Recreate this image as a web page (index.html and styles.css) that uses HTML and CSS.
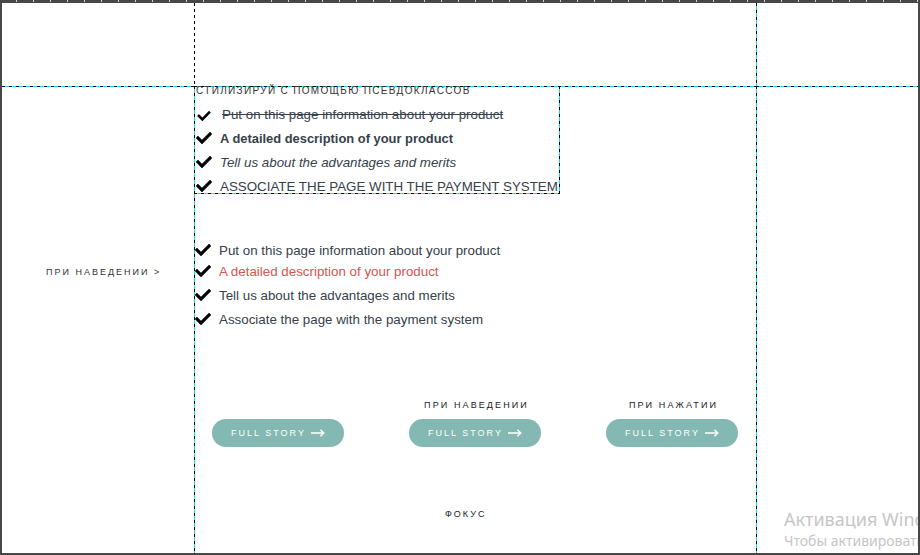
FILE: index.html
```html
<!DOCTYPE html>
<html lang="ru">
<head>
<meta charset="utf-8">
<title>Псевдоклассы</title>
<link rel="stylesheet" href="styles.css">
</head>
<body>
<div class="frame">
  <div class="cell c1r1"></div>
  <div class="cell c2r1"></div>
  <div class="cell c3r1"></div>

  <div class="cell c1r2">
    <span class="side-label">ПРИ НАВЕДЕНИИ &gt;</span>
  </div>

  <div class="cell c2r2">
    <div class="pseudo-box">
      <div class="box-title">СТИЛИЗИРУЙ С ПОМОЩЬЮ ПСЕВДОКЛАССОВ</div>
      <ul class="checks">
        <li class="item-strike"><svg class="check" viewBox="0 64 512 384"><path d="M173.9 439.4l-166.4-166.4c-10-10-10-26.2 0-36.2l36.2-36.2c10-10 26.2-10 36.2 0L192 312.7 432.1 72.6c10-10 26.2-10 36.2 0l36.2 36.2c10 10 10 26.2 0 36.2l-294.4 294.4c-10 10-26.2 10-36.2 0z"/></svg><span>Put on this page information about your product</span></li>
        <li class="item-bold"><svg class="check" viewBox="0 64 512 384"><path d="M173.9 439.4l-166.4-166.4c-10-10-10-26.2 0-36.2l36.2-36.2c10-10 26.2-10 36.2 0L192 312.7 432.1 72.6c10-10 26.2-10 36.2 0l36.2 36.2c10 10 10 26.2 0 36.2l-294.4 294.4c-10 10-26.2 10-36.2 0z"/></svg><span>A detailed description of your product</span></li>
        <li class="item-italic"><svg class="check" viewBox="0 64 512 384"><path d="M173.9 439.4l-166.4-166.4c-10-10-10-26.2 0-36.2l36.2-36.2c10-10 26.2-10 36.2 0L192 312.7 432.1 72.6c10-10 26.2-10 36.2 0l36.2 36.2c10 10 10 26.2 0 36.2l-294.4 294.4c-10 10-26.2 10-36.2 0z"/></svg><span>Tell us about the advantages and merits</span></li>
        <li class="item-upper"><svg class="check" viewBox="0 64 512 384"><path d="M173.9 439.4l-166.4-166.4c-10-10-10-26.2 0-36.2l36.2-36.2c10-10 26.2-10 36.2 0L192 312.7 432.1 72.6c10-10 26.2-10 36.2 0l36.2 36.2c10 10 10 26.2 0 36.2l-294.4 294.4c-10 10-26.2 10-36.2 0z"/></svg><span>Associate the page with the payment system</span></li>
      </ul>
    </div>

    <ul class="checks list-hover">
      <li><svg class="check" viewBox="0 64 512 384"><path d="M173.9 439.4l-166.4-166.4c-10-10-10-26.2 0-36.2l36.2-36.2c10-10 26.2-10 36.2 0L192 312.7 432.1 72.6c10-10 26.2-10 36.2 0l36.2 36.2c10 10 10 26.2 0 36.2l-294.4 294.4c-10 10-26.2 10-36.2 0z"/></svg><span>Put on this page information about your product</span></li>
      <li class="item-hovered"><svg class="check" viewBox="0 64 512 384"><path d="M173.9 439.4l-166.4-166.4c-10-10-10-26.2 0-36.2l36.2-36.2c10-10 26.2-10 36.2 0L192 312.7 432.1 72.6c10-10 26.2-10 36.2 0l36.2 36.2c10 10 10 26.2 0 36.2l-294.4 294.4c-10 10-26.2 10-36.2 0z"/></svg><span>A detailed description of your product</span></li>
      <li><svg class="check" viewBox="0 64 512 384"><path d="M173.9 439.4l-166.4-166.4c-10-10-10-26.2 0-36.2l36.2-36.2c10-10 26.2-10 36.2 0L192 312.7 432.1 72.6c10-10 26.2-10 36.2 0l36.2 36.2c10 10 10 26.2 0 36.2l-294.4 294.4c-10 10-26.2 10-36.2 0z"/></svg><span>Tell us about the advantages and merits</span></li>
      <li><svg class="check" viewBox="0 64 512 384"><path d="M173.9 439.4l-166.4-166.4c-10-10-10-26.2 0-36.2l36.2-36.2c10-10 26.2-10 36.2 0L192 312.7 432.1 72.6c10-10 26.2-10 36.2 0l36.2 36.2c10 10 10 26.2 0 36.2l-294.4 294.4c-10 10-26.2 10-36.2 0z"/></svg><span>Associate the page with the payment system</span></li>
    </ul>

    <div class="buttons">
      <div class="btn-col">
        <span class="btn-label"></span>
        <a class="btn" href="#">FULL STORY<svg class="arrow" viewBox="0 0 14 8"><path d="M0 4H12.6M9.4 0.8L12.8 4L9.4 7.2"/></svg></a>
      </div>
      <div class="btn-col">
        <span class="btn-label">ПРИ НАВЕДЕНИИ</span>
        <a class="btn" href="#">FULL STORY<svg class="arrow" viewBox="0 0 14 8"><path d="M0 4H12.6M9.4 0.8L12.8 4L9.4 7.2"/></svg></a>
      </div>
      <div class="btn-col">
        <span class="btn-label">ПРИ НАЖАТИИ</span>
        <a class="btn" href="#">FULL STORY<svg class="arrow" viewBox="0 0 14 8"><path d="M0 4H12.6M9.4 0.8L12.8 4L9.4 7.2"/></svg></a>
      </div>
    </div>

    <div class="focus-label">ФОКУС</div>
  </div>

  <div class="cell c3r2"></div>

  <div class="watermark">
    <div class="wm-title">Активация Windows</div>
    <div class="wm-sub">Чтобы активировать Windows, перейдите в раздел «Параметры».</div>
  </div>
</div>
</body>
</html>
```

FILE: styles.css
```css
* { box-sizing: border-box; }

html, body {
  margin: 0;
  padding: 0;
  background: #fff;
}

body {
  font-family: "Liberation Sans", Arial, sans-serif;
  color: #333;
}

.frame {
  --vdash: repeating-linear-gradient(to bottom, #000 0 3px, #19d3f6 3px 7px);
  --hdash: repeating-linear-gradient(to right, #000 0 3px, #19d3f6 3px 7px);
  --vdash-plain: repeating-linear-gradient(to bottom, #000 0 3px, transparent 3px 6px);
  position: relative;
  width: 920px;
  height: 555px;
  border: 2px solid #474747;
  border-top: 3px solid #474747;
  display: grid;
  grid-template-columns: 192px 562px 1fr;
  grid-template-rows: 83px 1fr;
}

/* ruler ticks in the top edge */
.frame::before {
  content: "";
  position: absolute;
  top: -3px;
  left: -2px;
  right: -2px;
  height: 2px;
  background: repeating-linear-gradient(to right, transparent 0 16px, #d4d4d4 16px 17px);
}

.cell { min-width: 0; }

.c2r1 {
  background: var(--vdash-plain) left top / 1px 100% no-repeat;
}

.c3r1 {
  background: var(--vdash) left top / 1px 100% no-repeat;
}

.c1r2 {
  background: var(--hdash) left top / 100% 1px no-repeat;
  padding: 180px 0 0 44px;
}

.c2r2 {
  background:
    var(--hdash) left top / 100% 1px no-repeat,
    var(--vdash) left top / 1px 100% no-repeat;
  display: flex;
  flex-direction: column;
  align-items: flex-start;
}

.c3r2 {
  background:
    var(--hdash) left top / 100% 1px no-repeat,
    var(--vdash) left top / 1px 100% no-repeat;
}

.side-label {
  display: block;
  font-size: 9px;
  line-height: 12px;
  letter-spacing: 2px;
  color: #333;
  white-space: nowrap;
}

/* dashed pseudo-class demo box */
.pseudo-box {
  width: 366px;
  height: 108px;
  padding-left: 1px;
  background:
    var(--hdash) left top / 100% 1px no-repeat,
    var(--hdash) left bottom / 100% 1px no-repeat,
    var(--vdash) left top / 1px 100% no-repeat,
    var(--vdash) right top / 1px 100% no-repeat;
}

.box-title {
  font-size: 10px;
  line-height: 10px;
  letter-spacing: 1.33px;
  color: #333;
  white-space: nowrap;
  padding-left: 1px;
}

.checks {
  list-style: none;
  margin: 6px 0 0;
  padding: 0;
}

.checks li {
  display: flex;
  align-items: center;
  height: 24px;
  padding-left: 1px;
  font-size: 13.35px;
  color: #36414a;
  white-space: nowrap;
}

.check {
  width: 16px;
  height: 12px;
  flex: none;
  margin-right: 8px;
  fill: #000;
}

.item-strike span {
  text-decoration: line-through;
  padding-left: 2px;
}

.item-strike .check {
  height: 10px;
  margin-top: 4px;
}

.item-bold span {
  font-weight: bold;
  font-size: 12.9px;
}

.item-italic span { font-style: italic; }
.item-upper span { text-transform: uppercase; }

.list-hover {
  margin-top: 44px;
}

.list-hover .item-hovered {
  margin-top: -3px;
  color: #dc5350;
}

/* buttons */
.buttons {
  display: flex;
  gap: 65px;
  padding-left: 18px;
  margin-top: 68px;
}

.btn-col {
  display: flex;
  flex-direction: column;
  align-items: center;
  gap: 8px;
}

.btn-label {
  display: block;
  height: 12px;
  font-size: 9px;
  line-height: 12px;
  letter-spacing: 2.1px;
  color: #222;
  white-space: nowrap;
  margin-left: 3px;
}

.btn {
  display: flex;
  align-items: center;
  justify-content: center;
  gap: 5px;
  width: 132px;
  height: 28px;
  border-radius: 14px;
  background: #83b8b3;
  color: #fff;
  font-size: 9px;
  letter-spacing: 2px;
  text-decoration: none;
}

.arrow {
  width: 14px;
  height: 8px;
  fill: none;
  stroke: #fff;
  stroke-width: 1.4;
}

.focus-label {
  margin: 61px 0 0 251px;
  font-size: 9px;
  line-height: 12px;
  letter-spacing: 2px;
  color: #222;
}

/* OS activation watermark overlay, clipped at the frame edge */
.watermark {
  position: absolute;
  left: 782px;
  top: 504px;
  width: 134px;
  overflow: hidden;
  white-space: nowrap;
  font-family: "Noto Sans", "Open Sans", sans-serif;
  color: #c6c6c6;
  pointer-events: none;
}

.wm-title {
  font-size: 18px;
  line-height: 24px;
}

.wm-sub {
  margin-top: 1px;
  font-size: 14px;
  line-height: 18px;
}
```
